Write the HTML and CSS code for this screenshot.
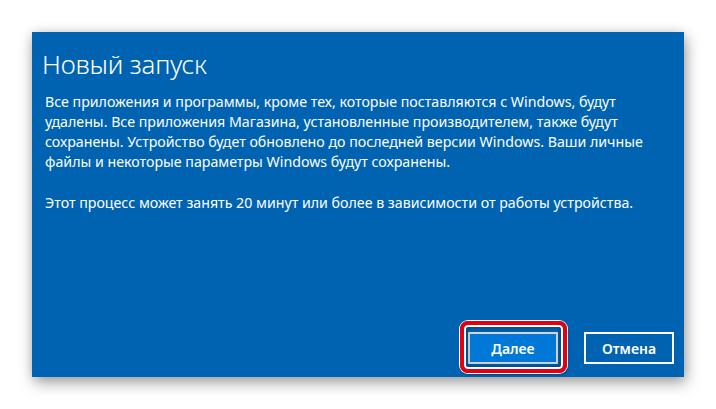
FILE: index.html
```html
<!DOCTYPE html>
<html lang="ru">
<head>
<meta charset="utf-8">
<link rel="stylesheet" href="styles.css">
</head>
<body>
<div class="page">
  <div class="dialog">
    <h1 class="title">Новый запуск</h1>
    <p class="text">Все приложения и программы, кроме тех, которые поставляются с Windows, будут<br>удалены. Все приложения Магазина, установленные производителем, также будут<br>сохранены. Устройство будет обновлено до последней версии Windows. Ваши личные<br>файлы и некоторые параметры Windows будут сохранены.</p>
    <p class="text">Этот процесс может занять 20 минут или более в зависимости от работы устройства.</p>
    <div class="actions">
      <button class="btn btn-primary">Далее</button>
      <button class="btn btn-secondary">Отмена</button>
    </div>
  </div>
</div>
</body>
</html>
```
FILE: styles.css
```css
html, body {
  margin: 0;
  padding: 0;
  background: #ffffff;
}
.page {
  padding: 32px;
}
.dialog {
  width: 652px;
  height: 345px;
  box-sizing: border-box;
  background: #0063b1;
  color: #ffffff;
  font-family: "Noto Sans", "Open Sans", sans-serif;
  padding: 14px 10px 13px 10px;
  display: flex;
  flex-direction: column;
  box-shadow: 2px 6px 14px rgba(0, 0, 0, 0.35), 0 0 10px rgba(0, 0, 0, 0.12);
}
.title {
  margin: 0;
  font-size: 26px;
  font-weight: 300;
  line-height: 36px;
  letter-spacing: -0.2px;
}
.text {
  margin: 10px 0 21px 3px;
  font-size: 14.2px;
  line-height: 20px;
}
.text + .text {
  margin-top: 0;
}
.actions {
  margin-top: auto;
  display: flex;
  justify-content: flex-end;
  gap: 26px;
}
.btn {
  width: 90px;
  height: 32px;
  box-sizing: border-box;
  font-family: "Noto Sans", "Open Sans", sans-serif;
  font-size: 14px;
  font-weight: 600;
  color: #ffffff;
  border: 2px solid #ffffff;
  padding: 0;
  position: relative;
}
.btn-primary {
  background: #0078d7;
  border-color: #d6d6d6;
}
.btn-primary::after {
  content: "";
  position: absolute;
  left: -10px;
  right: -11px;
  top: -13px;
  bottom: -11px;
  border: 4px solid #e4000f;
  border-radius: 8px;
  box-shadow: 0 0 0 1px #ffffff, inset 0 0 0 2px #ffffff, inset 0 0 4px 3px rgba(0, 0, 0, 0.35), 1px 2px 3px rgba(0, 0, 0, 0.3);
}
.btn-secondary {
  background: transparent;
}
```
